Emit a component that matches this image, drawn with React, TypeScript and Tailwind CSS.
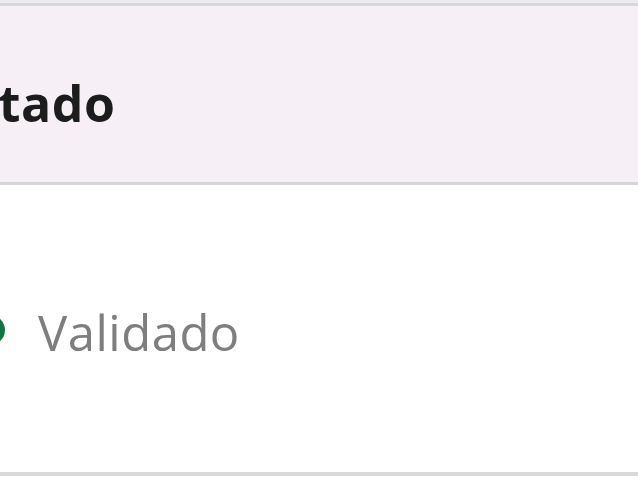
import React from 'react';

// Zoomed-in slice of a table: "Estado" header cell and one status row
const rows = [{ status: 'Validado', color: 'bg-[#14743f]' }];

export default function App() {
  return (
    <div className="w-[638px] h-[480px] overflow-hidden bg-white font-['Open_Sans','Noto_Sans',sans-serif]">
      <div className="h-[3px] bg-[#ececee]" />
      <div className="border-t-[3px] border-b-[3px] border-[#d6d6d8] bg-[#f6f0f6] h-[182px] flex items-start pt-[72px]">
        <span className="-ml-[55px] text-[50px] font-bold text-[#1c1c1c] leading-none tracking-[0.5px]">
          Estado
        </span>
      </div>
      {rows.map((r) => (
        <div
          key={r.status}
          className="h-[291px] border-b-[4px] border-[#d9d9d9] flex items-start pt-[123px] gap-[33px] bg-white"
        >
          <span className={`-ml-[25px] mt-[7px] w-[30px] h-[30px] rounded-full ${r.color} shrink-0`} />
          <span className="text-[49px] text-[#7e7e7e] leading-none tracking-[0.5px]">{r.status}</span>
        </div>
      ))}
    </div>
  );
}
